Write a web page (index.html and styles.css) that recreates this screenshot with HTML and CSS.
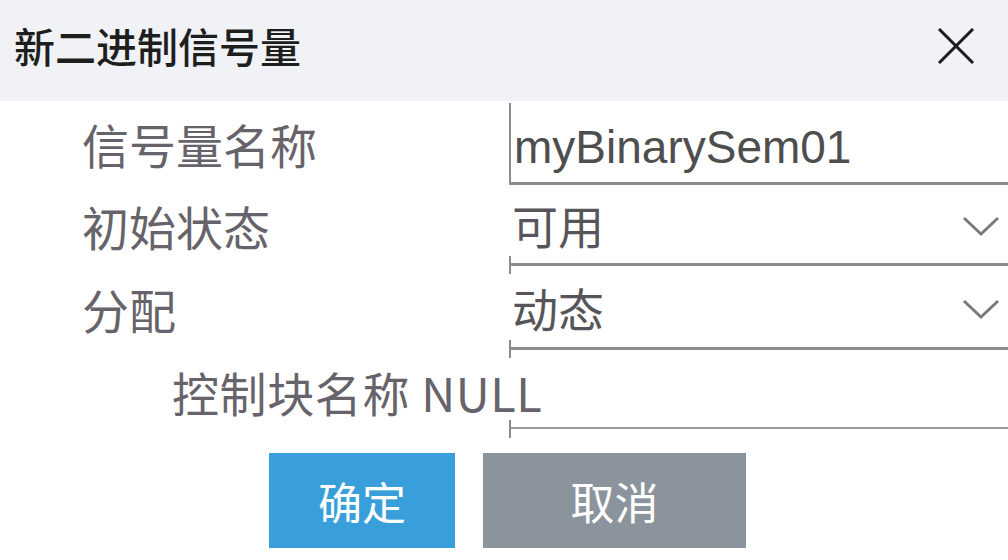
FILE: index.html
```html
<!DOCTYPE html>
<html lang="zh-CN">

<head>
    <meta charset="UTF-8">
    <meta name="viewport" content="width=device-width, initial-scale=1.0">
    <title>新二进制信号量</title>
    <link rel="stylesheet" href="styles.css">
</head>

<body>
    <div class="dialog">
        <header class="titlebar">
            <span class="title">新二进制信号量</span>
            <button class="close" aria-label="关闭">
                <svg width="40" height="36" viewBox="0 0 40 36">
                    <path d="M3 1 L37 35 M37 1 L3 35" stroke="#1e1e1e" stroke-width="3" fill="none" />
                </svg>
            </button>
        </header>

        <main class="form">
            <label class="label">信号量名称</label>
            <div class="field field-first">
                <span class="value latin">myBinarySem01</span>
            </div>

            <label class="label">初始状态</label>
            <div class="field field-tick">
                <span class="value">可用</span>
                <svg class="chevron" width="38" height="22" viewBox="0 0 38 22">
                    <path d="M2 3 L19 19 L36 3" stroke="#7a7a7a" stroke-width="3" fill="none" />
                </svg>
            </div>

            <label class="label">分配</label>
            <div class="field field-tick">
                <span class="value">动态</span>
                <svg class="chevron" width="38" height="22" viewBox="0 0 38 22">
                    <path d="M2 3 L19 19 L36 3" stroke="#7a7a7a" stroke-width="3" fill="none" />
                </svg>
            </div>

            <label class="label label-sub">控制块名称 NULL</label>
            <div class="field field-box"></div>
        </main>

        <!-- actions -->
        <div class="actions">
            <button class="btn btn-ok">确定</button>
            <button class="btn btn-cancel">取消</button>
        </div>
    </div>
</body>

</html>
```

FILE: styles.css
```css
body {
    margin: 0;
    background: #fff;
    font-family: "Noto Sans CJK SC", "Noto Sans", sans-serif;
    overflow: hidden;
}

.dialog {
    width: 1008px;
    height: 560px;
    background: #fff;
}

/* Title bar */
.titlebar {
    height: 101px;
    box-sizing: border-box;
    padding: 0 32px 10px 14px;
    display: flex;
    align-items: center;
    justify-content: space-between;
    background: #f1f2f6;
}

.title {
    font-size: 41px;
    font-weight: 500;
    color: #1e1e1e;
    line-height: 1;
}

.close {
    border: none;
    background: none;
    padding: 0;
    display: flex;
    cursor: pointer;
}

/* Form grid */
.form {
    display: grid;
    grid-template-columns: 509px 1fr;
    grid-template-rows: 84px 81px 84px 79px;
}

.label {
    padding-left: 82px;
    display: flex;
    align-items: center;
    font-size: 47px;
    color: #67636a;
    white-space: nowrap;
    line-height: 1;
}

.label-sub {
    padding-left: 172px;
    padding-top: 4px;
    letter-spacing: 0.6px;
}

.field {
    position: relative;
    display: flex;
    align-items: center;
    justify-content: space-between;
    border-bottom: 3px solid #8c8c8c;
    padding: 0 8px 0 3px;
    box-sizing: border-box;
}

.value {
    font-size: 46px;
    color: #58555a;
    line-height: 1;
}

.latin {
    font-family: "Liberation Sans", Arial, sans-serif;
    font-size: 46px;
    color: #4e4e4e;
    padding-top: 8px;
}

.field-first {
    border-left: 2px solid #8c8c8c;
    margin-top: 2px;
}

.field-tick::after,
.field-box::after {
    content: "";
    position: absolute;
    left: 0;
    bottom: -11px;
    width: 2px;
    height: 18px;
    background: #8c8c8c;
}

.field-box {
    border-bottom: 2px solid #999;
}

.chevron {
    margin-top: 4px;
}

/* Buttons */
.actions {
    display: flex;
    gap: 28px;
    padding-left: 269px;
    margin-top: 24px;
}

.btn {
    height: 95px;
    border: none;
    color: #fff;
    font-family: "Noto Sans CJK SC", sans-serif;
    font-size: 44px;
    cursor: pointer;
}

.btn-ok {
    width: 186px;
    background: #389fdb;
}

.btn-cancel {
    width: 263px;
    background: #8b949c;
}
```
